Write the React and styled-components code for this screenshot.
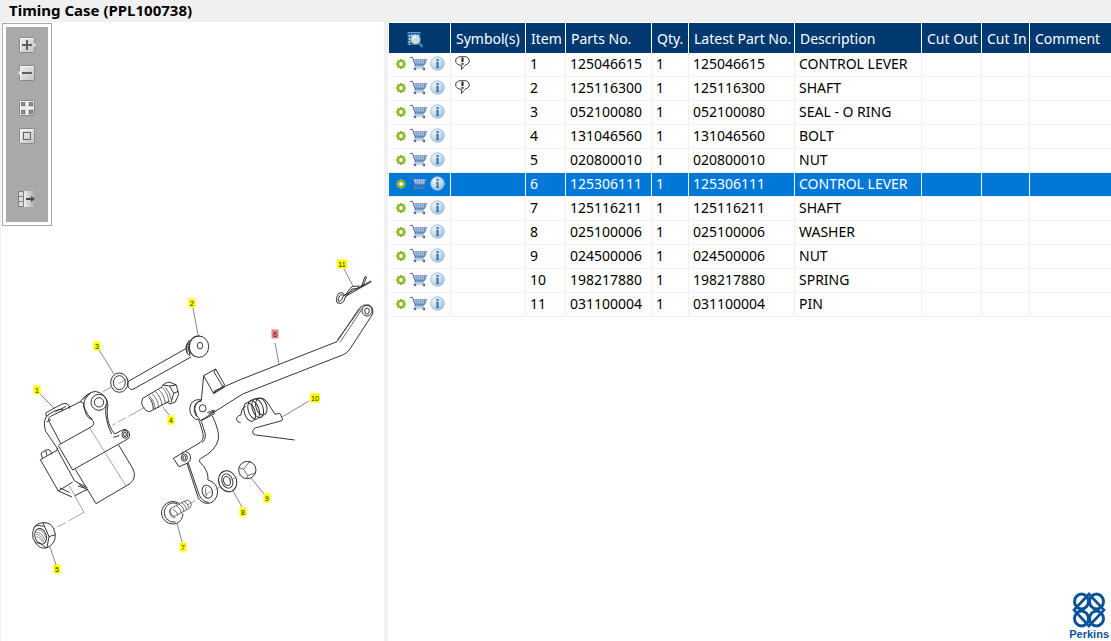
import React, { useState } from 'react';
import styled, { createGlobalStyle } from 'styled-components';

const GlobalStyle = createGlobalStyle`
  * {
    box-sizing: border-box;
  }
  body {
    margin: 0;
    background: #f0f0f0;
    color: #000;
    font-family: 'Noto Sans', 'Open Sans', sans-serif;
    font-size: 14px;
  }
`;

const Page = styled.div`
  display: flex;
  flex-direction: column;
  min-height: 100vh;
`;

const Title = styled.h1`
  margin: 0;
  height: 22px;
  padding-left: 9px;
  font-size: 15px;
  line-height: 20px;
  font-weight: 700;
`;

const Content = styled.div`
  flex: 1;
  display: flex;
  gap: 4px;
`;

const DrawingPane = styled.section`
  flex: 0 0 384px;
  background: #fff;
  border-left: 1px solid #f0f0f0;
  padding-top: 1px;
`;

const ToolFrame = styled.div`
  width: 50px;
  margin-left: 1px;
  padding: 3px;
  border: 1px solid #a8a8a8;
`;

const Toolbar = styled.div`
  display: flex;
  flex-direction: column;
  align-items: center;
  gap: 10px;
  height: 195px;
  padding-top: 9px;
  background: #a9a9a9;
`;

const ToolButton = styled.button`
  display: block;
  width: 18px;
  height: 18px;
  padding: 0;
  border: 0;
  background: none;
  cursor: pointer;
  margin-top: ${(props) => props.$space || 0}px;
`;

const Drawing = styled.svg`
  display: block;
  width: 100%;
`;

const PartsPane = styled.section`
  flex: 1;
  min-width: 0;
  display: flex;
  flex-direction: column;
  background: #fff;
  padding: 1px 0 0 1px;
`;

const Table = styled.table`
  width: 100%;
  table-layout: fixed;
  border-collapse: separate;
  border-spacing: 0;
`;

const HeadCell = styled.th`
  height: 30px;
  padding: 2px 0 0 5px;
  background: #003870;
  border-right: 1px solid #fff;
  color: #fff;
  font-weight: 400;
  line-height: 20px;
  text-align: left;
  white-space: nowrap;
  &:last-child {
    border-right: 0;
  }
`;

const HeadIcon = styled.svg`
  display: block;
  margin-left: 13px;
`;

const Row = styled.tr`
  background: ${(props) => (props.$selected ? '#0078d7' : '#fff')};
  color: ${(props) => (props.$selected ? '#fff' : '#000')};
  cursor: default;
`;

const Cell = styled.td`
  height: 24px;
  padding: 0 0 2px 4px;
  border-right: 1px solid #f0f0f0;
  border-bottom: 1px solid #f0f0f0;
  line-height: 20px;
  white-space: nowrap;
  &:last-child {
    border-right: 0;
  }
`;

const Actions = styled.div`
  display: flex;
  align-items: center;
  gap: 3px;
  padding-left: 2px;
`;

const IconButton = styled.button`
  display: block;
  padding: 0;
  border: 0;
  background: none;
  cursor: pointer;
  line-height: 0;
`;

const Brand = styled.div`
  align-self: flex-end;
  margin-top: auto;
  padding: 0 2px 1px 0;
  display: flex;
  flex-direction: column;
  align-items: center;
  color: #0b5299;
  font-family: 'Liberation Sans', Arial, sans-serif;
  font-size: 11px;
  font-weight: 700;
  line-height: 12px;
`;

const COLUMNS = [
  { label: 'Symbol(s)', width: 75 },
  { label: 'Item', width: 40 },
  { label: 'Parts No.', width: 86 },
  { label: 'Qty.', width: 37 },
  { label: 'Latest Part No.', width: 106 },
  { label: 'Description', width: 127 },
  { label: 'Cut Out', width: 60 },
  { label: 'Cut In', width: 48 },
  { label: 'Comment' },
];

const PARTS = [
  { item: 1, no: '125046615', description: 'CONTROL LEVER', note: true },
  { item: 2, no: '125116300', description: 'SHAFT', note: true },
  { item: 3, no: '052100080', description: 'SEAL - O RING' },
  { item: 4, no: '131046560', description: 'BOLT' },
  { item: 5, no: '020800010', description: 'NUT' },
  { item: 6, no: '125306111', description: 'CONTROL LEVER' },
  { item: 7, no: '125116211', description: 'SHAFT' },
  { item: 8, no: '025100006', description: 'WASHER' },
  { item: 9, no: '024500006', description: 'NUT' },
  { item: 10, no: '198217880', description: 'SPRING' },
  { item: 11, no: '031100004', description: 'PIN' },
];

// "from" and "to" are the ends of the leader line
const CALLOUTS = [
  { item: 1, x: 37, y: 390, from: [40, 394], to: [54, 408] },
  { item: 2, x: 192, y: 303, from: [193, 308], to: [198, 335] },
  { item: 3, x: 97, y: 346, from: [99, 350], to: [114, 374] },
  { item: 4, x: 171, y: 420, from: [169, 415], to: [163, 407] },
  { item: 5, x: 57, y: 569, from: [56, 565], to: [50, 547] },
  { item: 6, x: 275, y: 334, from: [275, 343], to: [279, 364] },
  { item: 7, x: 183, y: 547, from: [182, 542], to: [177, 523] },
  { item: 8, x: 243, y: 512, from: [242, 507], to: [233, 491] },
  { item: 9, x: 267, y: 498, from: [264, 494], to: [251, 478] },
  { item: 10, x: 315, y: 398, from: [309, 401], to: [282, 417] },
  { item: 11, x: 342, y: 264, from: [344, 269], to: [353, 286] },
];

const ToolIcon = ({ children }) => (
  <svg width="18" height="18" viewBox="0 0 18 18" fill="none">
    <defs>
      <linearGradient id="tool" x1="0" y1="0" x2="1" y2="1">
        <stop offset="0" stopColor="#efefef" />
        <stop offset="1" stopColor="#c4c4c4" />
      </linearGradient>
      <linearGradient id="fade" x1="0" y1="0" x2="1" y2="0">
        <stop offset="0" stopColor="#eee" />
        <stop offset="1" stopColor="#a9a9a9" />
      </linearGradient>
    </defs>
    {children}
  </svg>
);

const Tile = () => (
  <>
    <rect x="1.5" y="1.5" width="15" height="15" rx="1" fill="url(#tool)" stroke="#888" />
    <path d="M2.5 15.5v-13h13" stroke="#f7f7f7" />
  </>
);

const PlusIcon = () => (
  <ToolIcon>
    <Tile />
    <path d="M16 6.500l2 2.500-2 2.500z" fill="#e5e5e5" />
    <path d="M9 4v10M4 9h10" stroke="#606060" strokeWidth="2" />
  </ToolIcon>
);

const MinusIcon = () => (
  <ToolIcon>
    <Tile />
    <path d="M2 6.500L0 9l2 2.500z" fill="#e5e5e5" />
    <path d="M4 9h10" stroke="#606060" strokeWidth="2" />
  </ToolIcon>
);

const GridIcon = () => (
  <ToolIcon>
    <Tile />
    <path d="M9 2v14M2 9h14" stroke="#eee" strokeWidth="2" />
    {[3.5, 11.5].map((x) =>
      [3.5, 11.5].map((y) => (
        <rect key={`${x}-${y}`} x={x} y={y} width="3" height="3" fill="#999" stroke="#707070" />
      ))
    )}
  </ToolIcon>
);

const FitIcon = () => (
  <ToolIcon>
    <Tile />
    <rect x="5.500" y="5.500" width="7" height="7" stroke="#606060" />
  </ToolIcon>
);

const ExportIcon = () => (
  <ToolIcon>
    <rect x="6" y="1" width="11" height="16" fill="url(#fade)" />
    <path d="M1 2h4v4H1zM1 7h4v4H1zM1 12h4v4H1z" fill="#ddd" />
    <path d="M.5 1.500h5v15h-5zM.5 6.500h5M.5 11.500h5" stroke="#808080" />
    <path d="M8 9h5" stroke="#484848" strokeWidth="2" />
    <path d="M13 6l4 3-4 3z" fill="#484848" />
  </ToolIcon>
);

const GearIcon = () => (
  <svg width="12" height="12" viewBox="0 0 12 12" fill="none">
    <path
      d="M6 1v10M1 6h10M2.500 2.500l7 7M9.500 2.500l-7 7"
      stroke="#8fc02c"
      strokeWidth="2"
    />
    <circle cx="6" cy="6" r="2.900" fill="#fff" stroke="#86b428" strokeWidth="2" />
  </svg>
);

const CartIcon = () => (
  <svg width="17" height="15" viewBox="0 0 17 15" fill="none">
    <path d="M3 3h13l-1.500 5.500H5z" fill="#b9cee5" />
    <path
      d="M3.500 3.500h12.500M4 5.500h11.500M5 7.500h10M6.500 3v6M8.500 3v6M10.500 3v6M12.500 3v6M14.500 3v5"
      stroke="#6a92c0"
      strokeWidth=".6"
    />
    <path d="M0 1.500h2.500L5.500 10H14M5 8.700h9.500L16.500 3" stroke="#4c78ab" />
    <path d="M5.500 10L4 12h11" stroke="#7f97b6" strokeWidth=".8" />
    <circle cx="5" cy="13" r="1.300" fill="#4e7096" />
    <circle cx="14" cy="13" r="1.300" fill="#4e7096" />
  </svg>
);

const InfoIcon = () => (
  <svg width="15" height="15" viewBox="0 0 15 15" fill="none">
    <defs>
      <radialGradient id="info" cx=".35" cy=".3" r=".8">
        <stop offset="0" stopColor="#eef6fc" />
        <stop offset=".6" stopColor="#bdd7ec" />
        <stop offset="1" stopColor="#8db5d8" />
      </radialGradient>
    </defs>
    <circle cx="7.500" cy="7.500" r="6.800" fill="url(#info)" stroke="#9dbedb" strokeWidth=".8" />
    <path d="M6.500 3h2v2h-2zM6 6h2.500v5H9v1H6v-1h.6V7H6z" fill="#356da5" />
  </svg>
);

const NoteIcon = () => (
  <svg width="15" height="15" viewBox="0 0 15 15" fill="none">
    <path
      d="M4 .7h7l2.500 1.500.9 2.800-1 2.500L10 9.300 6.500 13.500V9.500L3 8.500.8 6.500V3z"
      fill="#fff"
      stroke="#333"
      strokeWidth=".9"
    />
    <path d="M7.500 1.500V6M7.500 7v1.700" stroke="#222" strokeWidth="2" />
  </svg>
);

const SearchIcon = () => (
  <HeadIcon width="17" height="17" viewBox="0 0 17 17" fill="none">
    <rect x=".5" y="1" width="13" height="13" fill="#1f6ba6" />
    <path d="M.5 1.500h13" stroke="#58a6d6" />
    <path d="M2.500 4v10M4 4.500h8" stroke="#d5e7f2" strokeWidth="1.500" strokeDasharray="2 1" />
    <circle cx="8.500" cy="8.500" r="4.500" fill="#d2d8dc" stroke="#b6c6d0" />
    <path d="M6 8a2.500 2.500 0 0 1 3-2.500" stroke="#fff" strokeWidth="1.500" />
    <path d="M12 12l3.500 4" stroke="#4b8dba" strokeWidth="2" />
  </HeadIcon>
);

const PerkinsMark = () => (
  <svg width="34" height="36" viewBox="0 0 34 36" fill="none" stroke="#0b5299">
    <g strokeWidth="3">
      <ellipse cx="9.500" cy="9.500" rx="7" ry="7.500" />
      <ellipse cx="24.500" cy="9.500" rx="7" ry="7.500" />
      <ellipse cx="9.500" cy="26.500" rx="7" ry="7.500" />
      <ellipse cx="24.500" cy="26.500" rx="7" ry="7.500" />
    </g>
    <path d="M2 18L17 2l15 16-15 16z" strokeWidth="2.600" />
  </svg>
);

// control unit, item 1, with nut 5
const ControlUnit = () => (
  <g transform="translate(0 380) scale(.3333)">
    <path d="M138 106v-8l46-25q18-8 25 8l-1 5M146 108l-8-2M144 104l22-12 14-3 18-10M166 96q10-12 24-8" />
    <path d="M146 122q-3-8 6-13l88-43M140 108q-12 20-3 46l37 54M146 122l36 68M153 118l-13 8" />
    <path d="M240 66q12-2 11 14l8 24q7 12 17 15 12 12-3 22l-97 54M265 46q-20 18-10 42 8 20 22 30M240 66q20-28 46-32 34 6 38 42c-6 28-1 60 20 86" />
    <path d="M250 58q10-14 22-18M318 74q-5 46 17 88" />
    <circle cx="297" cy="67" r="24" />
    <circle cx="297" cy="67" r="14" />
    <path d="M344 162l28-14q18 2 17 20-2 10-18 16l-153 86-43-73M340 172l18-5" />
    <ellipse cx="375" cy="163" rx="9" ry="12" />
    <ellipse cx="375" cy="163" rx="4" ry="7" />
    <path d="M356 195l42 70q14 28-8 46l-102 60-62-103" />
    <path d="M171 211l-50 28 54 94 43-27M170 205l54 98 38 20M175 333l41 18M180 324l28 13M225 347l33-17M234 318l20 6M238 313l18 13M262 332l-9-8" />
    <path d="M127 235l-4-15 13-9q14-6 17 6l2 6M137 212l4 14" />
    <path d="M268 142l110 176M208 318l44 79" stroke="#777" strokeWidth="2" />
    <path d="M252 397l-92 51" stroke="#777" strokeWidth="2" strokeDasharray="54 9 26 9" />
    <path d="M103 441q10-13 26-13 12-1 22 5 12 10 15 30 0 16-6 25-9 14-22 16-18 3-30-13l-9-16q-4-18 4-34zM129 428l18 42-6 33M147 470l19-6M103 441l8-5 21 3M108 489l11-1 20 16" />
    <ellipse cx="122" cy="469" rx="17" ry="24" transform="rotate(-18 122 469)" />
    <path d="M109 458q15-5 27 24M109 464q13-4 23 22M110 471q10-3 17 16M116 450q16 2 22 24" strokeWidth="1.500" />
  </g>
);

// shaft 2, seal 3 and bolt 4
const ShaftAndBolt = () => (
  <g transform="translate(90 290) scale(.3333)">
    <ellipse cx="327" cy="170" rx="29" ry="32" />
    <path d="M330 138q-25-4-36 28-1 20 20 34" />
    <ellipse cx="330" cy="167" rx="8" ry="10" />
    <path d="M294 158q-10 10-3 32l10 8M300 160q-8 16 0 35M298 150q-12 14-6 38" />
    <path d="M289 175L113 275M303 201l-174 97q-8 3-14-7-4-10 0-16" />
    <ellipse cx="88" cy="278" rx="26" ry="29" />
    <ellipse cx="88" cy="278" rx="18" ry="21" />
    <path d="M86 281l30-17M38 305l26-14" stroke="#777" strokeWidth="2" />
    <path d="M158 325l58-34M181 364l58-31M158 325q-8 18 7 34 8 8 16 5M176 323q13 10 14 36" />
    <path d="M176 316q18 16 20 42M186 311q18 16 20 42M196 305q18 16 20 42M206 299q18 16 20 42M216 292q18 16 20 42M226 292q14 14 18 38" strokeWidth="2" />
    <path d="M216 290q8-14 24-13l19 8 7 28-10 23-16 6-10-6M218 285l21 3 12 22-8 28M239 288l19-3M251 310l14-6" />
    <path d="M164 352l-97 54" stroke="#777" strokeWidth="2" strokeDasharray="56 8 28 8" />
  </g>
);

// lever 6, spring 10 and pin 11
const Lever = () => (
  <g transform="translate(180 250) scale(.3333)">
    <path d="M103 423l78-34 290-114 67-100q12-14 29-10 15 8 11 27l-68 105q-8 12-20 17L188 432 62 512q-14-12-18-35 2-20 20-26l7-74 36-20 27 48-33 24zM71 377l30 54M107 357l-5 9 26 43M101 431l33-20" />
    <path d="M473 268l69-92M480 277l67-101" strokeWidth="2" />
    <ellipse cx="561" cy="182" rx="15" ry="16" />
    <ellipse cx="561" cy="183" rx="7" ry="9" />
    <path d="M64 450q-22-5-32 14-9 28 14 43l14 4M64 454q-15-1-20 14-5 16 5 31" />
    <ellipse cx="68" cy="475" rx="10" ry="11" />
    <path d="M86 492l20-10M82 488l20-8M98 483l6 8-40 21" />
    <path d="M182 518q-14-2-12-15 4-6 13-8l2-13q3-9 12-13" />
    <ellipse cx="209" cy="486" rx="16" ry="29" transform="rotate(-18 209 486)" />
    <ellipse cx="221" cy="480" rx="16" ry="29" transform="rotate(-18 221 480)" />
    <ellipse cx="233" cy="475" rx="16" ry="29" transform="rotate(-18 233 475)" />
    <ellipse cx="244" cy="470" rx="16" ry="26" transform="rotate(-18 244 470)" />
    <path d="M204 457q20-16 45-12l12 10 24 38 14-3q6 6 6 13l3 3-2 6-81 22q-10 7-6 17l8 4 117 15" />
    <path d="M495 140l79-45M492 136l81-43M545 108l10-28 5 1-12 29M494 138l18-25q6-6 14-4l12-1M499 140l17-23 14-1 17-8M494 134q-8-10-18-4-11 15-5 28 10 7 20-3l5-14M491 136q-7-5-12 2-6 8-4 15 5 3 10-3l6-14" />
  </g>
);

// bracket with shaft 7, washer 8 and nut 9
const Bracket = () => (
  <g transform="translate(150 400) scale(.3333)">
    <path d="M148 64l11 36q3 18-9 28l-80 47 17 25 24-10q13-7 10-23-4-12-15-12M154 64l12 38q0 20-10 26M187 48q22 44 18 70-8 34-52 57-8 5-3 12 26 24 24 53 14 4 22 14 12 18 3 38-10 20-30 18-18-3-25-19L111 190M114 187l34 99q10 20 28 21M95 162l4-7" />
    <ellipse cx="103" cy="173" rx="9" ry="11" />
    <ellipse cx="103" cy="173" rx="4" ry="6" />
    <ellipse cx="172" cy="275" rx="15" ry="20" transform="rotate(-20 172 275)" />
    <path d="M170 261q-8 8 1 28" strokeWidth="2" />
    <ellipse cx="233" cy="244" rx="27" ry="32" transform="rotate(-20 233 244)" />
    <ellipse cx="232" cy="243" rx="16" ry="22" transform="rotate(-20 232 243)" />
    <ellipse cx="231" cy="243" rx="10" ry="14" transform="rotate(-20 231 243)" />
    <path d="M205 239q2 28 30 36" strokeWidth="2" />
    <ellipse cx="292" cy="210" rx="26" ry="26" />
    <path d="M267 203l14 5 14-19 8-3M281 208l12 19 24-9M293 227l-3 8" strokeWidth="2" />
    <path d="M166 284l48-25M237 243l34-18M113 315l34-20" stroke="#777" strokeWidth="2" strokeDasharray="26 8" />
    <path d="M86 309q-24-12-43 7-15 20-4 39 14 21 40 16 19-10 20-30M83 312q-22-10-36 10-9 18 2 34 12 14 28 10" />
    <path d="M62 326l16-9 18-10 18-7q8 3 10 14-1 10-8 12l-42 23q-12-2-14-14zM68 328q14 6 16 18M62 326l-4 11 7 13 11 3M78 316q14 8 17 24M86 311q14 8 17 23M94 307q13 8 16 21M102 303q12 8 14 20" strokeWidth="2" />
  </g>
);

const Callout = ({ item, x, y, selected, onSelect }) => {
  const width = item > 9 ? 10 : 7;
  return (
    <g onClick={() => onSelect(item)}>
      <rect x={x - width / 2} y={y - 4.5} width={width} height="9" fill={selected ? '#f08080' : '#ff0'} />
      <text x={x} y={y + 3} textAnchor="middle" fontFamily="Liberation Sans, sans-serif" fontSize="7" fill="#222">
        {item}
      </text>
    </g>
  );
};

const PartsDrawing = ({ selected, onSelect }) => (
  <Drawing viewBox="1 226 383 415" role="img" aria-label="Timing Case exploded view">
    <g fill="none" stroke="#262626" strokeWidth="2.800" strokeLinejoin="round">
      <ControlUnit />
      <ShaftAndBolt />
      <Lever />
      <Bracket />
    </g>
    {CALLOUTS.map(({ item, from, to }) => (
      <line key={item} x1={from[0]} y1={from[1]} x2={to[0]} y2={to[1]} stroke="#666" strokeWidth=".8" />
    ))}
    {CALLOUTS.map(({ item, x, y }) => (
      <Callout
        key={item}
        item={item}
        x={x}
        y={y}
        selected={item === selected}
        onSelect={onSelect}
      />
    ))}
  </Drawing>
);

const App = () => {
  const [selected, setSelected] = useState(6);

  return (
    <Page>
      <GlobalStyle />
      <Title>Timing Case (PPL100738)</Title>
      <Content>
        <DrawingPane>
          <ToolFrame>
            <Toolbar>
              <ToolButton aria-label="Zoom in"><PlusIcon /></ToolButton>
              <ToolButton aria-label="Zoom out"><MinusIcon /></ToolButton>
              <ToolButton aria-label="Fit all" $space={7}><GridIcon /></ToolButton>
              <ToolButton aria-label="Actual size"><FitIcon /></ToolButton>
              <ToolButton aria-label="Move toolbar" $space={35}><ExportIcon /></ToolButton>
            </Toolbar>
          </ToolFrame>
          <PartsDrawing selected={selected} onSelect={setSelected} />
        </DrawingPane>
        <PartsPane>
          <Table>
            <colgroup>
              <col width="62" />
              {COLUMNS.map((column) => (
                <col key={column.label} width={column.width} />
              ))}
            </colgroup>
            <thead>
              <tr>
                <HeadCell aria-label="Actions"><SearchIcon /></HeadCell>
                {COLUMNS.map((column) => (
                  <HeadCell key={column.label}>{column.label}</HeadCell>
                ))}
              </tr>
            </thead>
            <tbody>
              {PARTS.map((part) => (
                <Row
                  key={part.item}
                  $selected={part.item === selected}
                  onClick={() => setSelected(part.item)}
                >
                  <Cell>
                    <Actions>
                      <IconButton aria-label="Options"><GearIcon /></IconButton>
                      <IconButton aria-label="Add to cart"><CartIcon /></IconButton>
                      <IconButton aria-label="Information"><InfoIcon /></IconButton>
                    </Actions>
                  </Cell>
                  <Cell>{part.note && <IconButton aria-label="Note"><NoteIcon /></IconButton>}</Cell>
                  <Cell>{part.item}</Cell>
                  <Cell>{part.no}</Cell>
                  <Cell>1</Cell>
                  <Cell>{part.no}</Cell>
                  <Cell>{part.description}</Cell>
                  <Cell />
                  <Cell />
                  <Cell />
                </Row>
              ))}
            </tbody>
          </Table>
          <Brand>
            <PerkinsMark />
            Perkins
          </Brand>
        </PartsPane>
      </Content>
    </Page>
  );
};

export default App;
